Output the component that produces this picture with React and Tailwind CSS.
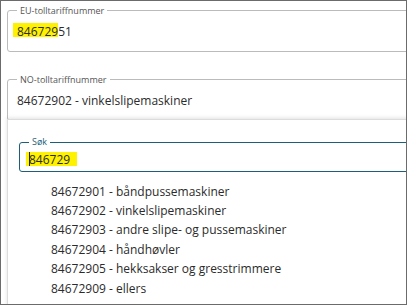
const options = [
  '84672901 - båndpussemaskiner',
  '84672902 - vinkelslipemaskiner',
  '84672903 - andre slipe- og pussemaskiner',
  '84672904 - håndhøvler',
  '84672905 - hekksakser og gresstrimmere',
  '84672909 - ellers',
]

export default function App() {
  return (
    <div className="relative h-[305px] w-[407px] overflow-hidden border border-[#6b6b6b] bg-white font-['Open_Sans',sans-serif] text-[#2b2b2b]">
      <div className="w-[440px] pl-[6px] pt-[3.5px]">
        <fieldset className="h-[47px] rounded-[3px] border border-[#bbb] px-[9px]">
          <legend className="px-[3px] text-[9px] leading-[12px] text-[#555]">EU-tolltariffnummer</legend>
          <div className="pt-[7px] text-[12px] leading-[16px]">
            <span className="relative">
              <span className="absolute left-[-4px] top-[0px] h-[14px] w-[45px] bg-[#fff200]" />
              <span className="relative">84672951</span>
            </span>
          </div>
        </fieldset>

        <fieldset className="mt-[22px] h-[47px] rounded-[3px] border border-[#bbb] px-[9px]">
          <legend className="px-[3px] text-[9px] leading-[12px] text-[#555]">NO-tolltariffnummer</legend>
          <div className="pt-[7px] text-[12px] leading-[16px]">84672902 - vinkelslipemaskiner</div>
        </fieldset>
      </div>

      {/* dropdown panel */}
      <div className="absolute left-[6px] top-[118px] h-[200px] w-[430px] border-l border-t border-[#dcdcdc] bg-white pl-[11px] pt-[16px] shadow-[0_-1px_4px_rgba(0,0,0,0.12)]">
        <fieldset className="rounded-[3px] border border-[#1d5f7a] px-[9px] pb-[2.5px]">
          <legend className="px-[3px] text-[9px] leading-[12px] text-[#1d5f7a]">Søk</legend>
          <div className="pt-[4px] text-[12px] leading-[16px]">
            <span className="relative">
              <span className="absolute left-[-3px] top-[1px] h-[14px] w-[51px] bg-[#fff200]" />
              <span className="absolute left-0 top-[1px] h-[14px] w-px bg-[#222]" />
              <span className="relative">846729</span>
            </span>
          </div>
        </fieldset>

        <ul className="mt-[10.5px] pl-[32px] text-[12px]">
          {options.map((o) => (
            <li key={o} className="flex h-[19.4px] items-center whitespace-nowrap">
              {o}
            </li>
          ))}
        </ul>
      </div>
    </div>
  )
}
